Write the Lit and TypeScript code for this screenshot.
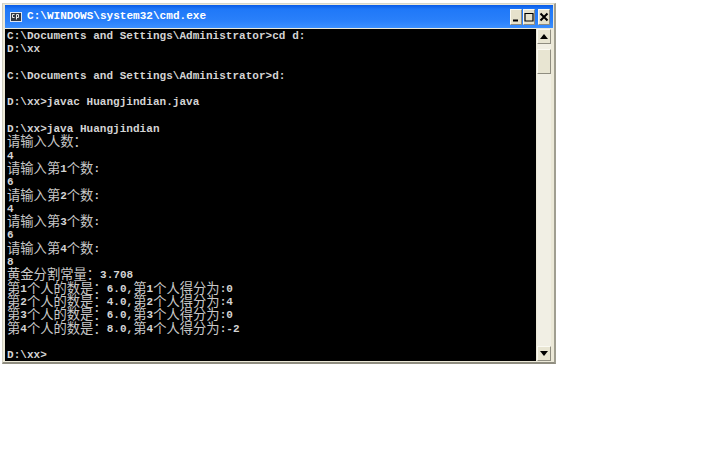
import { LitElement, html, css } from "lit";
import { customElement } from "lit/decorators.js";

const LINES = [
  "C:\\Documents and Settings\\Administrator>cd d:",
  "D:\\xx",
  "",
  "C:\\Documents and Settings\\Administrator>d:",
  "",
  "D:\\xx>javac Huangjindian.java",
  "",
  "D:\\xx>java Huangjindian",
  "请输入人数：",
  "4",
  "请输入第1个数:",
  "6",
  "请输入第2个数:",
  "4",
  "请输入第3个数:",
  "6",
  "请输入第4个数:",
  "8",
  "黄金分割常量：3.708",
  "第1个人的数是：6.0,第1个人得分为:0",
  "第2个人的数是：4.0,第2个人得分为:4",
  "第3个人的数是：6.0,第3个人得分为:0",
  "第4个人的数是：8.0,第4个人得分为:-2",
  "",
  "D:\\xx>",
];

@customElement("app-root")
export class AppRoot extends LitElement {
  static styles = css`
    :host { display: block; width: 720px; height: 450px; background: #fff; overflow: hidden; }
    .page { padding: 3px 0 0 2px; }
    .win {
      width: 554px; height: 361px; box-sizing: border-box;
      background: #ece9d8; border: 1px solid #9a9888; border-top-color: #d8d6c8; border-left-color: #d0cec0;
      border-right: 2px solid #a09e90; border-bottom: 2px solid #8f8d80;
      padding: 1px 1px 1px 2px; display: flex; flex-direction: column;
    }
    .title {
      height: 23px; flex: none; display: flex; align-items: center; padding: 0 3px 0 5px;
      background: linear-gradient(180deg, #0a5be6 0%, #1f78f8 18%, #2a80fa 70%, #3c90ff 100%);
      font: bold 11px/1 "Liberation Mono", monospace; letter-spacing: 0.03px; color: #fff;
    }
    .sysicon { width: 12px; height: 10px; margin-right: 5px; flex: none; background: #33373f; border: 1px solid #dfe6f2; box-sizing: border-box; }
    .sysicon svg { display: block; }
    .caption { flex: 1; white-space: pre; }
    .btn {
      width: 12px; height: 16px; margin-left: 1px; flex: none; background: #e6e2cc; box-sizing: border-box;
      border: 1px solid #fbfaf2; border-right-color: #8f8d80; border-bottom-color: #8f8d80;
      display: flex; align-items: center; justify-content: center;
    }
    .btn.close { margin-left: 3px; width: 12px; }
    .body { flex: 1; min-height: 0; display: flex; padding: 1px 2px 0 0; }
    .console {
      flex: 1; background: #000; color: #d4d4d4; padding: 1px 0 0 2px; overflow: hidden;
      font: 700 11px/13.3px "Liberation Mono", monospace; letter-spacing: 0.03px;
    }
    .line { height: 13.3px; white-space: pre; display: flex; align-items: center; }
    .cjk { font: 400 13.3px/13.3px "Noto Sans CJK SC", sans-serif; letter-spacing: 0; color: #c8c8c8; height: 13.3px; margin-bottom: 4px; }
    .bar { width: 14px; flex: none; margin-left: 1px; background: #f1efe4; display: flex; flex-direction: column; justify-content: space-between; position: relative; }
    .sb {
      height: 15px; box-sizing: border-box; background: #e8e5d2; border: 1px solid #fbfaf2;
      border-right-color: #8f8d80; border-bottom-color: #8f8d80; display: flex; align-items: center; justify-content: center;
    }
    .thumb { position: absolute; left: 0; right: 0; top: 20px; height: 25px; }
  `;

  private seg(text: string) {
    const parts = text.match(/[\u3000-\u9fff\uff00-\uffef]+|[^\u3000-\u9fff\uff00-\uffef]+/g) || [];
    return parts.map((p) =>
      /^[\u3000-\u9fff\uff00-\uffef]/.test(p)
        ? html`<span class="cjk">${p}</span>`
        : html`<span>${p}</span>`
    );
  }

  render() {
    return html`<div class="page"><div class="win">
      <div class="title">
        <div class="sysicon"><svg width="10" height="8" viewBox="0 0 10 8"><path d="M1.5 1.5H3.5M1.5 1.5V4.5H3.5M5.5 1.5H7.5V4.5H5.5M5.5 1.5V6.5" stroke="#e8e8e8" fill="none"/></svg></div>
        <div class="caption">C:\\WINDOWS\\system32\\cmd.exe</div>
        <div class="btn"><svg width="8" height="10" viewBox="0 0 8 10"><path d="M1 8.5H6" stroke="#000" stroke-width="2"/></svg></div>
        <div class="btn"><svg width="10" height="10" viewBox="0 0 10 10"><path d="M1 1.5H9M1 1V9H9V1" stroke="#000" fill="none" stroke-width="1.2"/></svg></div>
        <div class="btn close"><svg width="10" height="10" viewBox="0 0 10 10"><path d="M1.5 1.5L8.5 8.5M8.5 1.5L1.5 8.5" stroke="#000" stroke-width="2"/></svg></div>
      </div>
      <div class="body">
        <div class="console">${LINES.map((l) => html`<div class="line">${this.seg(l)}</div>`)}</div>
        <div class="bar">
          <div class="sb"><svg width="8" height="5" viewBox="0 0 8 5"><path d="M4 0L8 5H0Z" fill="#000"/></svg></div>
          <div class="sb thumb"></div>
          <div class="sb"><svg width="8" height="5" viewBox="0 0 8 5"><path d="M0 0H8L4 5Z" fill="#000"/></svg></div>
        </div>
      </div>
    </div></div>`;
  }
}
